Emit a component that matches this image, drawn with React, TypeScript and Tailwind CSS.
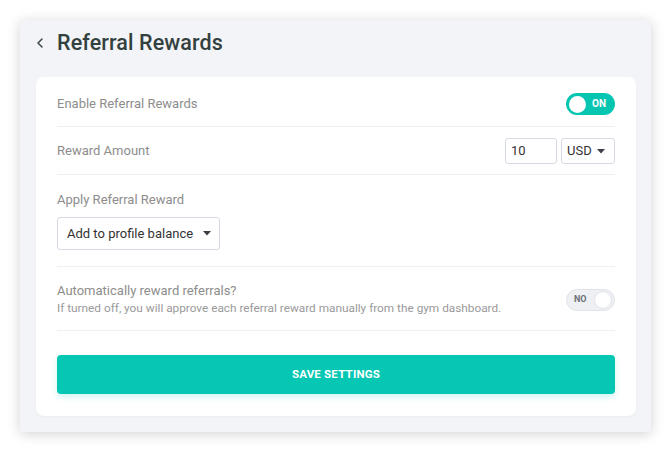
import { ChevronLeft } from "lucide-react"

function Caret() {
  return (
    <svg width="8" height="5" viewBox="0 0 8 5" className="shrink-0">
      <path d="M0 0 L8 0 L4 4.5 Z" fill="#3a3f45" />
    </svg>
  )
}

function Toggle({ on }: { on: boolean }) {
  if (on) {
    return (
      <div className="flex items-center w-[49px] h-[22px] rounded-full bg-[#06c6b2] pl-[3px] pr-[9px] justify-between">
        <span className="w-[17px] h-[17px] rounded-full bg-white" />
        <span className="text-[10px] font-bold text-white leading-none">ON</span>
      </div>
    )
  }
  return (
    <div className="flex items-center w-[49px] h-[22px] rounded-full bg-[#eef0f3] border border-[#e0e3e8] pl-[7px] pr-[2px] justify-between">
      <span className="text-[9px] font-bold text-[#6b7079] leading-none">NO</span>
      <span className="w-[18px] h-[18px] rounded-full bg-white border border-[#e0e3e8]" />
    </div>
  )
}

export default function App() {
  return (
    <div className="w-[670px] h-[452px] bg-white p-[20px] font-['Roboto',sans-serif]">
      <div className="w-[631px] h-[412px] bg-[#f3f4f7] shadow-[0_2px_12px_rgba(0,0,0,0.18)] pl-4 pr-[15px]">
        <div className="flex items-center h-[46px]">
          <ChevronLeft size={16} strokeWidth={2.2} className="text-[#3a4543] -ml-[4px]" />
          <h1 className="ml-[9px] text-[21.5px] font-medium text-[#33413e] tracking-[0.1px]">Referral Rewards</h1>
        </div>
        <div className="bg-white rounded-[8px] mt-[11px] px-[21px] pb-[22px] shadow-[0_1px_3px_rgba(0,0,0,0.04)]">
          <div className="flex items-center justify-between pt-[16px] pb-[11px] border-b border-[#eef0f3]">
            <span className="text-[13px] text-[#8d8d8d]">Enable Referral Rewards</span>
            <Toggle on />
          </div>
          <div className="flex items-center justify-between pt-[11px] pb-[10px] border-b border-[#eef0f3]">
            <span className="text-[13px] text-[#8d8d8d]">Reward Amount</span>
            <div className="flex gap-[4px]">
              <div className="w-[52px] h-[26px] border border-[#d5dae3] rounded-[3px] flex items-center px-[5px] text-[13px] text-[#333]">10</div>
              <div className="w-[54px] h-[26px] border border-[#d5dae3] rounded-[3px] flex items-center justify-between pl-[5px] pr-[9px] text-[13px] text-[#333]">
                USD
                <Caret />
              </div>
            </div>
          </div>
          <div className="pt-[17px] pb-[16px] border-b border-[#eef0f3]">
            <div className="text-[13px] leading-[16px] text-[#8d8d8d]">Apply Referral Reward</div>
            <div className="mt-[9px] w-[163px] h-[33px] border border-[#d5dae3] rounded-[3px] flex items-center justify-between pl-[9px] pr-[8px] text-[13px] text-[#333]">
              Add to profile balance
              <Caret />
            </div>
          </div>
          <div className="flex items-center justify-between pt-[16px] pb-[14px] border-b border-[#eef0f3]">
            <div>
              <div className="text-[13px] leading-[16px] text-[#8d8d8d]">Automatically reward referrals?</div>
              <div className="mt-[1px] text-[11.8px] leading-[16px] text-[#9a9a9a]">
                If turned off, you will approve each referral reward manually from the gym dashboard.
              </div>
            </div>
            <Toggle on={false} />
          </div>
          <button className="mt-[24px] w-full h-[39px] rounded-[4px] bg-[#06c7b3] text-white text-[11.5px] font-bold tracking-[0.2px] shadow-[0_3px_6px_rgba(6,199,179,0.2)]">
            SAVE SETTINGS
          </button>
        </div>
      </div>
    </div>
  )
}
